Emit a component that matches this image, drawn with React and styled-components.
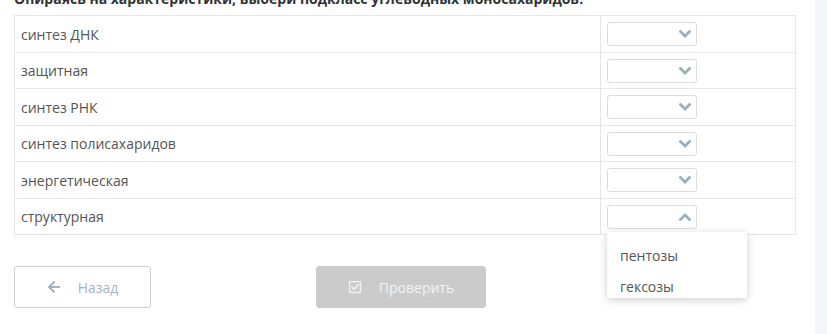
import React from 'react';
import styled, { createGlobalStyle } from 'styled-components';
import { FaArrowLeft, FaRegCheckSquare } from 'react-icons/fa';

const Global = createGlobalStyle`
  html, body {
    margin: 0;
    padding: 0;
    background: #f4f7fb;
    font-family: "Open Sans", "Liberation Sans", sans-serif;
    overflow: hidden;
  }
`;

const Page = styled.div`
  width: 815px;
  height: 334px;
  background: #fff;
  padding-left: 14px;
  box-sizing: border-box;
  overflow: hidden;
`;

const Heading = styled.h3`
  margin: -9px 0 0;
  font-size: 14px;
  line-height: 16px;
  font-weight: 700;
  color: #333;
  white-space: nowrap;
`;

const Table = styled.div`
  margin-top: 8px;
  width: 782px;
  border: 1px solid #e6e6e6;
  box-sizing: border-box;
`;

const Row = styled.div`
  display: grid;
  grid-template-columns: 586px 1fr;
  height: ${p => p.h}px;
  border-top: ${p => (p.first ? 'none' : '1px solid #e6e6e6')};
  box-sizing: border-box;
`;

const Label = styled.div`
  display: flex;
  align-items: center;
  padding-left: 6px;
  font-size: 14px;
  color: #555;
  border-right: 1px solid #e6e6e6;
`;

const Cell = styled.div`
  position: relative;
  display: flex;
  align-items: center;
  padding-left: 6px;
`;

const Select = styled.div`
  width: 90px;
  height: 24px;
  box-sizing: border-box;
  border: 1px solid #dcdcdc;
  border-radius: 3px;
  display: flex;
  align-items: center;
  justify-content: flex-end;
  padding-right: 5px;
  color: #9bb0bf;
`;

const Menu = styled.div`
  position: absolute;
  top: 33px;
  left: 6px;
  width: 140px;
  height: 66px;
  background: #fff;
  box-shadow: 0 2px 8px rgba(0, 0, 0, 0.2);
  border-radius: 2px;
  padding-top: 8px;
  box-sizing: border-box;
  z-index: 2;
`;

const Option = styled.div`
  height: 31px;
  line-height: 31px;
  padding-left: 13px;
  font-size: 14px;
  color: #555;
`;

const Actions = styled.div`
  display: flex;
  gap: 165px;
  margin-top: 31px;
`;

const Button = styled.div`
  width: ${p => p.w}px;
  height: 42px;
  box-sizing: border-box;
  border-radius: 3px;
  display: flex;
  align-items: center;
  justify-content: center;
  gap: 17px;
  font-size: 14px;
  border: 1px solid ${p => (p.solid ? '#cbcbcb' : '#cfcfcf')};
  background: ${p => (p.solid ? '#cbcbcb' : '#fff')};
  color: ${p => (p.solid ? '#f3f3f3' : '#a6b4c0')};
  svg {
    font-size: 14px;
  }
`;

const Chevron = ({ up }) => (
  <svg width="12" height="8" viewBox="0 0 12 8">
    <polyline
      points={up ? '1.5,6.5 6,2 10.5,6.5' : '1.5,1.5 6,6 10.5,1.5'}
      fill="none"
      stroke="currentColor"
      strokeWidth="2.8"
      strokeLinecap="square"
    />
  </svg>
);

const rows = [
  'синтез ДНК',
  'защитная',
  'синтез РНК',
  'синтез полисахаридов',
  'энергетическая',
  'структурная',
];

const heights = [36, 36, 37, 36, 37, 36];

export default function App() {
  return (
    <>
      <Global />
      <Page>
        <Heading>Опираясь на характеристики, выбери подкласс углеводных моносахаридов.</Heading>
        <Table>
          {rows.map((r, i) => {
            const open = i === rows.length - 1;
            return (
              <Row key={r} first={i === 0} h={heights[i]}>
                <Label>{r}</Label>
                <Cell>
                  <Select><Chevron up={open} /></Select>
                  {open && (
                    <Menu>
                      <Option>пентозы</Option>
                      <Option>гексозы</Option>
                    </Menu>
                  )}
                </Cell>
              </Row>
            );
          })}
        </Table>
        <Actions>
          <Button w={137}>
            <FaArrowLeft />
            Назад
          </Button>
          <Button w={170} solid>
            <FaRegCheckSquare />
            Проверить
          </Button>
        </Actions>
      </Page>
    </>
  );
}
